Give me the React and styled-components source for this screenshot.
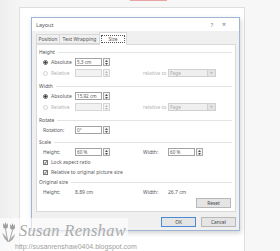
import React from "react";
import styled, { createGlobalStyle } from "styled-components";

const Global = createGlobalStyle`
  body {
    margin: 0;
    font-family: "Noto Sans", "Open Sans", sans-serif;
  }
`;

const Screen = styled.div`
  position: relative;
  width: 280px;
  height: 251px;
  overflow: hidden;
  background: linear-gradient(90deg, #eeeeee 0%, #f6f6f6 8%, #f7f7f7 100%);
`;

const RedMark = styled.div`
  position: absolute;
  left: 130px;
  top: 0;
  width: 37px;
  height: 1px;
  background: #eaa6a6;
`;

const Page = styled.div`
  box-sizing: border-box;
  margin: 7px 0 0 19px;
  width: 226px;
  height: 260px;
  background: #fff;
  border: 1px solid #dedede;
  padding: 9px 0 0 11px;
`;

const Dialog = styled.div`
  box-sizing: border-box;
  width: 209px;
  height: 214px;
  border: 1px solid #9fb5d3;
  background: #f0f0f0;
  box-shadow: 1px 2px 5px rgba(0, 0, 0, 0.18);
  display: flex;
  flex-direction: column;
`;

const TitleBar = styled.div`
  height: 13px;
  background: #fff;
  display: flex;
  align-items: center;
  padding: 0 8px 0 4px;
  font-size: 5.5px;
  color: #555;
`;

const Title = styled.span`
  flex: 1;
`;

const TitleBtn = styled.span`
  width: ${({ w }) => w}px;
  text-align: center;
  color: #777;
  font-size: ${({ size }) => size}px;
`;

const Body = styled.div`
  padding: 0 3px 0 4px;
  display: flex;
  flex-direction: column;
`;

const Tabs = styled.div`
  display: flex;
  align-items: flex-end;
  height: 12px;
  margin-top: 1px;
  position: relative;
  z-index: 1;
`;

const Tab = styled.div`
  box-sizing: border-box;
  width: ${({ w }) => w}px;
  height: ${({ active }) => (active ? 13 : 10)}px;
  margin-bottom: ${({ active }) => (active ? -1 : 0)}px;
  border: 1px solid #d9d9d9;
  border-bottom: ${({ active }) => (active ? "none" : "1px solid #d9d9d9")};
  margin-left: -1px;
  background: ${({ active }) => (active ? "#fff" : "#f0f0f0")};
  display: flex;
  align-items: center;
  justify-content: center;
  font-size: 5px;
  color: #555;
  &:first-child {
    margin-left: 0;
  }
`;

const Focus = styled.span`
  border: 1px dotted #555;
  padding: 0 6px;
  line-height: 6px;
  margin-top: -1px;
`;

const Panel = styled.div`
  box-sizing: border-box;
  height: 168px;
  background: #fff;
  border: 1px solid #d9d9d9;
  padding: 2px 3px 0 2px;
  display: flex;
  flex-direction: column;
`;

const Heading = styled.div`
  height: 10px;
  margin-top: ${({ gap }) => gap || 0}px;
  display: flex;
  align-items: center;
  gap: 3px;
  font-size: 5px;
  color: #555;
  &::after {
    content: "";
    flex: 1;
    height: 1px;
    background: #e4e4e4;
  }
`;

const Row = styled.div`
  height: ${({ h }) => h || 10}px;
  padding-left: 4px;
  display: grid;
  grid-template-columns: 32px 35px 33px 25px auto;
  align-items: center;
  font-size: 5px;
  color: ${({ dim }) => (dim ? "#b5b5b5" : "#5a5a5a")};
`;

const Choice = styled.div`
  display: flex;
  align-items: center;
  gap: 3px;
`;

const Radio = styled.span`
  box-sizing: border-box;
  flex-shrink: 0;
  width: 5px;
  height: 5px;
  border-radius: 50%;
  border: 1px solid ${({ off }) => (off ? "#d2d2d2" : "#666")};
  background: ${({ on }) => (on ? "radial-gradient(circle, #333 45%, #fff 60%)" : "#fff")};
`;

const Check = styled.span`
  box-sizing: border-box;
  flex-shrink: 0;
  width: 5px;
  height: 5px;
  border: 1px solid #777;
  background: #fff;
  display: flex;
`;

const CheckLabel = styled.span`
  white-space: nowrap;
`;

const Spin = styled.div`
  display: flex;
  gap: 1px;
  width: ${({ w }) => w || 35}px;
`;

const Field = styled.div`
  box-sizing: border-box;
  flex: 1;
  height: 8px;
  border: 1px solid ${({ off }) => (off ? "#d6d6d6" : "#a2a2a2")};
  background: ${({ off }) => (off ? "#f2f2f2" : "#fff")};
  font-size: 4.6px;
  color: #555;
  line-height: 6px;
  padding-left: 1px;
  white-space: nowrap;
  overflow: hidden;
`;

const Arrows = styled.div`
  box-sizing: border-box;
  width: 7px;
  height: 8px;
  border: 1px solid ${({ off }) => (off ? "#d6d6d6" : "#a8a8a8")};
  background: #f3f3f3;
  display: flex;
  flex-direction: column;
  align-items: center;
  justify-content: space-around;
`;

const Select = styled.div`
  box-sizing: border-box;
  width: 48px;
  height: 8px;
  border: 1px solid #d0d0d0;
  background: #efefef;
  display: flex;
  font-size: 4.6px;
  line-height: 6px;
  color: #aaa;
`;

const SelectText = styled.span`
  flex: 1;
  padding-left: 1px;
`;

const SelectBtn = styled.span`
  width: 7px;
  border-left: 1px solid #d0d0d0;
  background: #e3e3e3;
  display: flex;
  align-items: center;
  justify-content: center;
`;

const ButtonRow = styled.div`
  display: flex;
  justify-content: flex-end;
  gap: 5px;
  margin-top: ${({ top }) => top}px;
  padding-right: ${({ right }) => right || 0}px;
`;

const Button = styled.div`
  box-sizing: border-box;
  width: 35px;
  height: 10px;
  border: 1px solid ${({ primary }) => (primary ? "#4a88d4" : "#b8b8b8")};
  background: #e5e5e5;
  display: flex;
  align-items: center;
  justify-content: center;
  font-size: 4.8px;
  color: #444;
`;

const Watermark = styled.div`
  position: absolute;
  left: 0;
  top: 218px;
  width: 128px;
  height: 33px;
  background: rgba(255, 255, 255, 0.62);
`;

const Brand = styled.div`
  display: flex;
  align-items: flex-start;
  gap: 3px;
  padding: 3px 0 0 2px;
  svg {
    flex-shrink: 0;
  }
`;

const Script = styled.div`
  font-family: "Liberation Serif", "DejaVu Serif", serif;
  font-style: italic;
  font-size: 16.5px;
  line-height: 19px;
  letter-spacing: 0.3px;
  color: #ababab;
  white-space: nowrap;
`;

const Url = styled.div`
  font-family: "Liberation Sans", Arial, sans-serif;
  font-size: 7px;
  line-height: 6px;
  color: #a0a0a0;
  padding-left: 15px;
  margin-top: 1px;
  white-space: nowrap;
`;

const Tri = ({ down, off }) => (
  <svg width="3" height="2" viewBox="0 0 3 2">
    <path d={down ? "M0 0H3L1.5 2Z" : "M0 2H3L1.5 0Z"} fill={off ? "#bbb" : "#555"} />
  </svg>
);

const Tick = () => (
  <svg width="3" height="3" viewBox="0 0 3 3">
    <path d="M0.2 1.5 L1.1 2.5 L2.8 0.3" fill="none" stroke="#333" strokeWidth="0.8" />
  </svg>
);

const SpinBox = ({ value, off, w }) => (
  <Spin w={w}>
    <Field off={off}>{value}</Field>
    <Arrows off={off}>
      <Tri off={off} />
      <Tri down off={off} />
    </Arrows>
  </Spin>
);

const Tulips = () => (
  <svg width="14" height="22" viewBox="0 0 14 22">
    <g fill="#9e9e9e">
      <path d="M1 2 L2.5 4 L3.5 1 L4.5 4 L6 2 L5.8 6.5 Q3.5 9 1.2 6.5 Z" />
      <path d="M8 3 L9.4 5 L10.5 2 L11.6 5 L13 3 L12.8 7.5 Q10.5 10 8.2 7.5 Z" />
    </g>
    <g fill="none" stroke="#9e9e9e" strokeWidth="0.9">
      <path d="M3.5 8 Q4.5 14 6 21" />
      <path d="M10.5 9 Q9 15 7 21" />
    </g>
    <path d="M6 21 Q1 17 0.5 12 Q4 15 6.5 20 Z" fill="#a8a8a8" />
    <path d="M7 21 Q12.5 18 13 13 Q9.5 16 6.8 20 Z" fill="#a8a8a8" />
  </svg>
);

export default function App() {
  return (
    <Screen>
      <Global />
      <RedMark />
      <Page>
        <Dialog>
          <TitleBar>
            <Title>Layout</Title>
            <TitleBtn w={10} size={5.5}>?</TitleBtn>
            <TitleBtn w={14} size={7}>×</TitleBtn>
          </TitleBar>
          <Body>
            <Tabs>
              <Tab w={24}>Position</Tab>
              <Tab w={41}>Text Wrapping</Tab>
              <Tab w={28} active>
                <Focus>Size</Focus>
              </Tab>
            </Tabs>
            <Panel>
              <Heading>Height</Heading>
              <Row>
                <Choice>
                  <Radio on />
                  <span>Absolute</span>
                </Choice>
                <SpinBox value="5.3 cm" />
              </Row>
              <Row h={12} dim>
                <Choice>
                  <Radio off />
                  <span>Relative</span>
                </Choice>
                <SpinBox off />
                <span />
                <span>relative to</span>
                <Select>
                  <SelectText>Page</SelectText>
                  <SelectBtn>
                    <Tri down off />
                  </SelectBtn>
                </Select>
              </Row>

              <Heading gap={2}>Width</Heading>
              <Row>
                <Choice>
                  <Radio on />
                  <span>Absolute</span>
                </Choice>
                <SpinBox value="15.92 cm" />
              </Row>
              <Row h={12} dim>
                <Choice>
                  <Radio off />
                  <span>Relative</span>
                </Choice>
                <SpinBox off />
                <span />
                <span>relative to</span>
                <Select>
                  <SelectText>Page</SelectText>
                  <SelectBtn>
                    <Tri down off />
                  </SelectBtn>
                </Select>
              </Row>

              <Heading gap={2}>Rotate</Heading>
              <Row>
                <span>Rotation:</span>
                <SpinBox value="0°" />
              </Row>

              <Heading gap={2}>Scale</Heading>
              <Row>
                <span>Height:</span>
                <SpinBox value="60 %" />
                <span />
                <span>Width:</span>
                <SpinBox value="60 %" />
              </Row>
              <Row>
                <Choice>
                  <Check>
                    <Tick />
                  </Check>
                  <CheckLabel>Lock aspect ratio</CheckLabel>
                </Choice>
              </Row>
              <Row>
                <Choice>
                  <Check>
                    <Tick />
                  </Check>
                  <CheckLabel>Relative to original picture size</CheckLabel>
                </Choice>
              </Row>

              <Heading>Original size</Heading>
              <Row>
                <span>Height:</span>
                <span>8.89 cm</span>
                <span />
                <span>Width:</span>
                <span>26.7 cm</span>
              </Row>
              <ButtonRow top={1} right={1}>
                <Button>Reset</Button>
              </ButtonRow>
            </Panel>
            <ButtonRow top={5}>
              <Button primary>OK</Button>
              <Button>Cancel</Button>
            </ButtonRow>
          </Body>
        </Dialog>
      </Page>
      <Watermark>
        <Brand>
          <Tulips />
          <Script>Susan Renshaw</Script>
        </Brand>
        <Url>http://susanrenshaw0404.blogspot.com</Url>
      </Watermark>
    </Screen>
  );
}
